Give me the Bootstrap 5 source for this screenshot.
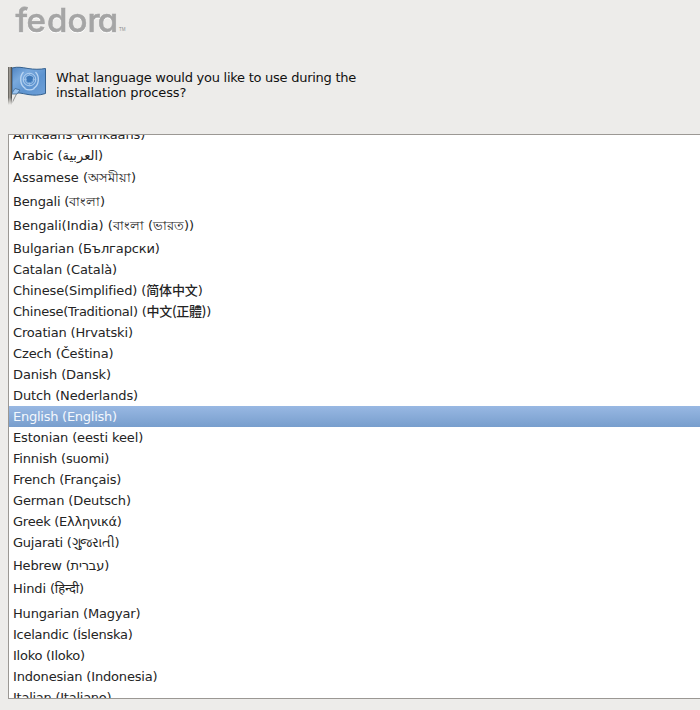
<!DOCTYPE html>
<html lang="en">
<head>
<meta charset="utf-8">
<title>Installer language</title>
<link href="https://cdn.jsdelivr.net/npm/bootstrap@5.3.0/dist/css/bootstrap.min.css" rel="stylesheet">
<style>
body{background:#edecea;font-family:"DejaVu Sans","Noto Sans CJK SC","Noto Sans",sans-serif;font-size:13px;color:#1a1a1a;width:700px;height:710px}
.brand-strip{height:65px;flex:none}
.brand-strip svg,.flag-art{display:block}
.wordmark{font-family:Inter,"Open Sans",sans-serif;font-weight:500;font-size:33px;font-feature-settings:"cv11";filter:drop-shadow(0 1px 0 #fff)}
.question-row{height:69px;padding-left:6px;flex:none}
.question{line-height:15px;padding-top:5px;margin-left:8px;color:#111;letter-spacing:-.26px}
.question .line-b{letter-spacing:-.12px}
.language-box{margin-left:8px;height:565px;background:#fff;border:1px solid #9b9894;border-right:0;flex:none}
.language-box ul{margin-top:-11px}
.language-box .list-group-item{height:21px;line-height:21px;padding:0 0 0 4px;border:0;color:#242424;background:transparent;white-space:nowrap;flex:none;letter-spacing:-.12px}
.language-box .tall{height:24px;line-height:23px;letter-spacing:0}
.language-box .mid{height:23px;line-height:21px}
.language-box .xtall{height:27px;line-height:25px}
.language-box .snug{letter-spacing:-.17px}
.language-box .tight{letter-spacing:-.25px}
.language-box .list-group-item.active{margin:0;color:#f4f8fd;background:linear-gradient(#98b8e3,#789ecd)}
.cjk{font-family:"Noto Sans CJK SC",sans-serif;font-weight:500;line-height:1}
.trad{font-family:"Noto Sans CJK TC",sans-serif}
</style>
<script src="https://cdn.jsdelivr.net/npm/bootstrap@5.3.0/dist/js/bootstrap.bundle.min.js"></script>
</head>
<body class="overflow-hidden d-flex flex-column">
<header class="brand-strip">
<svg width="140" height="50" viewBox="0 0 140 50" role="img" aria-label="fedora">
<text class="wordmark" x="15.500 26.500 47 67.500 87.500 97.800" y="32" fill="#a5a5a5" stroke="#a5a5a5" stroke-width=".6">fedora</text>
<text x="119" y="31" font-family="Liberation Sans" font-size="4.500" fill="#8c8c8c">TM</text>
</svg>
</header>
<main>
<section class="question-row d-flex align-items-start">
<svg class="flag-art" width="42" height="42" viewBox="0 0 42 42" aria-hidden="true">
<defs>
<linearGradient id="cloth" x1="0" y1="0" x2="1" y2="1"><stop offset="0" stop-color="#4f83c0"/><stop offset=".3" stop-color="#79a9dd"/><stop offset=".6" stop-color="#5e94d0"/><stop offset="1" stop-color="#6fa0d8"/></linearGradient>
<linearGradient id="pole" x1="0" x2="1"><stop offset="0" stop-color="#55534f"/><stop offset=".45" stop-color="#aaa69f"/><stop offset="1" stop-color="#3d3b38"/></linearGradient>
<linearGradient id="fade" x1="0" y1="0" x2="0" y2="1"><stop offset=".8" stop-color="#edecea" stop-opacity="0"/><stop offset="1" stop-color="#edecea"/></linearGradient>
</defs>
<path d="M6 3C12 1.500 16 2.500 22 3.500S34 4.500 39.500 3.500V28.500C33 30.500 28 30.500 22 29.500S12 27 6 28.500Z" fill="url(#cloth)" stroke="#35618f"/>
<g fill="none" stroke="#b9d5f3" stroke-width=".9"><circle cx="23.500" cy="14.500" r="6.300"/><circle cx="23.500" cy="14.500" r="4.300" stroke-opacity=".7"/><path d="M17.500 7C13 12 14 20 19.500 23.500M29.500 7C34 12 33 20 27.500 23.500M18.500 23.500C22 25.500 25 25.500 28.500 23.500" stroke-width="1.300"/><path d="M23.500 8v13M17 14.500h13" stroke-opacity=".5"/></g>
<path d="M20.500 12l3-1.500 3.500 1.500-.5 3.500-2.500 2-3-1Z" fill="#3e78b8"/>
<path d="M6 28L9 23.500l5 1.500-3 4H6Z" fill="#9bc3ee" stroke="#426991" stroke-width=".8"/>
<path d="M10.500 29L6 38" fill="none" stroke="#777" stroke-width=".8"/>
<rect x="2" y="2" width="4" height="38" fill="url(#pole)"/>
<rect x="1" y="2" width="6" height="38" fill="url(#fade)"/>
</svg>
<div class="question">What language would you like to use during the<br><span class="line-b">installation process?</span></div>
</section>
<section class="language-box overflow-hidden">
<ul class="list-group list-group-flush mb-0">
<li class="list-group-item"><span>Afrikaans (Afrikaans)</span></li>
<li class="list-group-item"><span>Arabic (العربية)</span></li>
<li class="list-group-item tall"><span>Assamese (অসমীয়া)</span></li>
<li class="list-group-item tall snug"><span>Bengali (বাংলা)</span></li>
<li class="list-group-item tall"><span>Bengali(India) (বাংলা (ভারত))</span></li>
<li class="list-group-item"><span>Bulgarian (Български)</span></li>
<li class="list-group-item"><span>Catalan (Català)</span></li>
<li class="list-group-item"><span>Chinese(Simplified) (<span class="cjk">简体中文</span>)</span></li>
<li class="list-group-item tight"><span>Chinese(Traditional) (<span class="cjk trad">中文(正體)</span>)</span></li>
<li class="list-group-item snug"><span>Croatian (Hrvatski)</span></li>
<li class="list-group-item"><span>Czech (Čeština)</span></li>
<li class="list-group-item"><span>Danish (Dansk)</span></li>
<li class="list-group-item"><span>Dutch (Nederlands)</span></li>
<li class="list-group-item tight active" aria-current="true"><span>English (English)</span></li>
<li class="list-group-item"><span>Estonian (eesti keel)</span></li>
<li class="list-group-item snug"><span>Finnish (suomi)</span></li>
<li class="list-group-item snug"><span>French (Français)</span></li>
<li class="list-group-item"><span>German (Deutsch)</span></li>
<li class="list-group-item tight"><span>Greek (Ελληνικά)</span></li>
<li class="list-group-item mid tight"><span>Gujarati (ગુજરાતી)</span></li>
<li class="list-group-item snug"><span>Hebrew (עברית)</span></li>
<li class="list-group-item xtall"><span>Hindi (हिन्दी)</span></li>
<li class="list-group-item snug"><span>Hungarian (Magyar)</span></li>
<li class="list-group-item tight"><span>Icelandic (Íslenska)</span></li>
<li class="list-group-item tight"><span>Iloko (Iloko)</span></li>
<li class="list-group-item snug"><span>Indonesian (Indonesia)</span></li>
<li class="list-group-item tight"><span>Italian (Italiano)</span></li>
</ul>
</section>
</main>
</body>
</html>
